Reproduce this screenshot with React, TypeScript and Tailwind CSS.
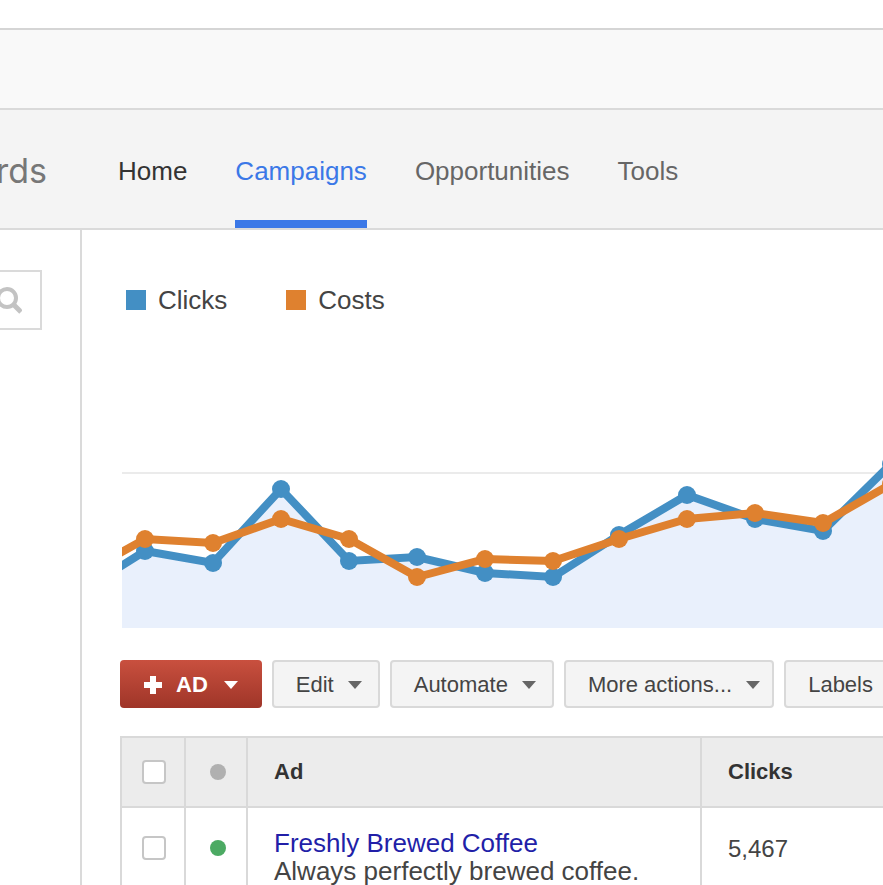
import React from "react";
import clsx from "clsx";

const navItems = [
  { label: "Home", href: "#home", className: "text-[#333]" },
  { label: "Campaigns", href: "#campaigns", className: "text-[#3b78e7]", active: true },
  { label: "Opportunities", href: "#opportunities", className: "text-[#666]" },
  { label: "Tools", href: "#tools", className: "text-[#666]" },
];

const legend = [
  { label: "Clicks", swatch: "bg-[#438fc4]" },
  { label: "Costs", swatch: "bg-[#df812f]" },
];

const actions = [
  { label: "Edit", padding: "pr-4" },
  { label: "Automate", padding: "pr-4" },
  { label: "More actions...", padding: "pr-3" },
  { label: "Labels", padding: "pr-4" },
];

const ads = [
  {
    title: "Freshly Brewed Coffee",
    description: "Always perfectly brewed coffee.",
    clicks: "5,467",
  },
];

// chart geometry, in chart pixels
const days = [-45, 23, 91, 159, 227, 295, 363, 431, 497, 565, 633, 701, 769];
const clicks = [122, 79, 91, 17, 89, 85, 101, 105, 63, 23, 47, 59, -8];
const costs = [105, 67, 71, 47, 67, 105, 87, 89, 67, 47, 41, 51, 12];
const chartHeight = 156;

const toPoints = (values: number[]) =>
  values.map((y, i) => `${days[i]},${y}`).join(" ");

function Caret({ className }: { className?: string }) {
  return (
    <svg width="14" height="8" viewBox="0 0 14 8" className={className} aria-hidden="true">
      <path d="M0 0h14L7 8z" fill="currentColor" />
    </svg>
  );
}

function Series({ values, color }: { values: number[]; color: string }) {
  return (
    <g fill={color}>
      <polyline points={toPoints(values)} fill="none" stroke={color} strokeWidth="8" />
      {values.map((y, i) => (
        <circle key={i} cx={days[i]} cy={y} r="9" />
      ))}
    </g>
  );
}

function Chart() {
  const area = `${days[0]},${chartHeight} ${toPoints(clicks)} ${days[days.length - 1]},${chartHeight}`;

  return (
    // the latest points rise above the grid line, so the plot keeps some headroom
    <svg className="block w-full h-[196px]" role="img" aria-label="Clicks and costs over time">
      <g transform="translate(0 40)">
        <rect x="0" y="0" width="100%" height="2" fill="#ebebeb" />
        <polygon points={area} fill="#e9f0fc" />
        <Series values={clicks} color="#438fc4" />
        <Series values={costs} color="#df812f" />
      </g>
    </svg>
  );
}

function Header() {
  return (
    <header>
      <div className="h-7 bg-white" />
      <div className="h-20 border-t-2 border-[#d5d5d5] bg-[#f9f9f9]" />
      <div className="flex h-[122px] border-y-2 border-[#dadada] bg-[#f4f4f4]">
        <div className="flex w-[47px] shrink-0 items-center justify-end overflow-hidden pt-1">
          <span className="font-['Inter',sans-serif] text-[34px] leading-10 text-[#777]">AdWords</span>
        </div>
        <nav className="flex gap-12 pl-[71px]" aria-label="Main">
          {navItems.map((item) => (
            <a
              key={item.label}
              href={item.href}
              aria-current={item.active ? "page" : undefined}
              className={clsx(
                "flex items-center border-b-8 pt-3 text-[26px] leading-8",
                item.active ? "border-[#3b78e7]" : "border-transparent",
                item.className
              )}
            >
              {item.label}
            </a>
          ))}
        </nav>
      </div>
    </header>
  );
}

function Sidebar() {
  return (
    <aside className="flex w-[82px] shrink-0 items-start justify-end overflow-hidden border-r-2 border-[#dadada] pt-10 pr-[38px]">
      <form className="flex h-[60px] w-[260px] shrink-0 items-center border-2 border-[#dadada] pr-[18px]" role="search">
        <input type="search" aria-label="Search campaigns" className="min-w-0 flex-1 outline-none" />
        <button type="submit" aria-label="Search">
          <svg width="28" height="28" viewBox="0 0 28 28" fill="none" stroke="#c3c3c3" strokeWidth="4">
            <circle cx="13" cy="12" r="9" />
            <path d="M19 18l8 8" strokeWidth="5" />
          </svg>
        </button>
      </form>
    </aside>
  );
}

function Toolbar() {
  return (
    <div className="flex gap-[10px] text-[22px] leading-7">
      <button
        type="button"
        className="flex h-12 shrink-0 items-center rounded-[4px] bg-linear-to-b from-[#c9503f] to-[#9f3528] px-6 pt-[2px] font-bold text-white"
      >
        <svg width="18" height="18" viewBox="0 0 18 18" aria-hidden="true">
          <path d="M6 0h6v6h6v6h-6v6H6v-6H0V6h6z" fill="currentColor" />
        </svg>
        <span className="ml-[14px]">AD</span>
        <Caret className="ml-4" />
      </button>
      {actions.map((action) => (
        <button
          key={action.label}
          type="button"
          className={clsx(
            "flex h-12 shrink-0 items-center gap-[14px] rounded-[4px] border-2 border-[#d9d9d9] bg-[#f4f4f4] pt-[2px] pl-[22px] text-[#444]",
            action.padding
          )}
        >
          {action.label}
          <Caret className="text-[#666]" />
        </button>
      ))}
    </div>
  );
}

const checkbox =
  "block size-6 appearance-none rounded-[4px] border-2 border-[#c6c6c6] bg-white checked:bg-[#3b78e7]";

function AdsTable() {
  return (
    <table className="w-full table-fixed border-separate border-spacing-0 text-left text-[#444]">
      <colgroup>
        <col className="w-16" />
        <col className="w-[62px]" />
        <col className="w-[454px]" />
        <col />
      </colgroup>
      <thead>
        <tr className="h-[72px] bg-[#ececec] text-[22px] leading-7 text-[#333] [&>th]:border-y-2 [&>th]:border-l-2 [&>th]:border-[#d9d9d9]">
          <th scope="col" className="pl-5">
            <input type="checkbox" aria-label="Select all ads" className={checkbox} />
          </th>
          <th scope="col" className="pl-6" aria-label="Status">
            <span className="block size-4 rounded-full bg-[#b0b0b0]" />
          </th>
          <th scope="col" className="pl-[26px]">Ad</th>
          <th scope="col" className="pl-[26px]">Clicks</th>
        </tr>
      </thead>
      <tbody>
        {ads.map((ad) => (
          <tr key={ad.title} className="align-top [&>td]:border-b-2 [&>td]:border-l-2 [&>td]:border-[#d9d9d9]">
            <td className="pt-7 pl-5">
              <input type="checkbox" aria-label={`Select ${ad.title}`} className={checkbox} />
            </td>
            <td className="pt-8 pl-6">
              <span className="block size-4 rounded-full bg-[#4caa63]" role="img" aria-label="Enabled" />
            </td>
            <td className="pt-[21px] pb-6 pl-[26px] text-[26px] leading-7">
              <a href="#ad" className="block text-[#221fa8]">{ad.title}</a>
              {ad.description}
            </td>
            <td className="pt-[29px] pl-[26px] text-[24px] leading-6">{ad.clicks}</td>
          </tr>
        ))}
      </tbody>
    </table>
  );
}

export default function App() {
  return (
    <div className="flex h-screen flex-col overflow-hidden bg-white font-['Liberation_Sans',Arial,sans-serif]">
      <Header />
      <div className="flex flex-1">
        <Sidebar />
        <main className="min-w-0 flex-1 overflow-hidden pt-[54px] pl-[38px]">
          <ul className="flex gap-[59px] pl-[6px] text-[26px] leading-8 text-[#444]">
            {legend.map((item) => (
              <li key={item.label} className="flex items-center gap-3">
                <span className={clsx("size-5", item.swatch)} />
                {item.label}
              </li>
            ))}
          </ul>

          <div className="mt-[116px] pl-[2px]">
            <Chart />
          </div>

          <div className="mt-8">
            <Toolbar />
          </div>

          <div className="mt-7">
            <AdsTable />
          </div>
        </main>
      </div>
    </div>
  );
}
